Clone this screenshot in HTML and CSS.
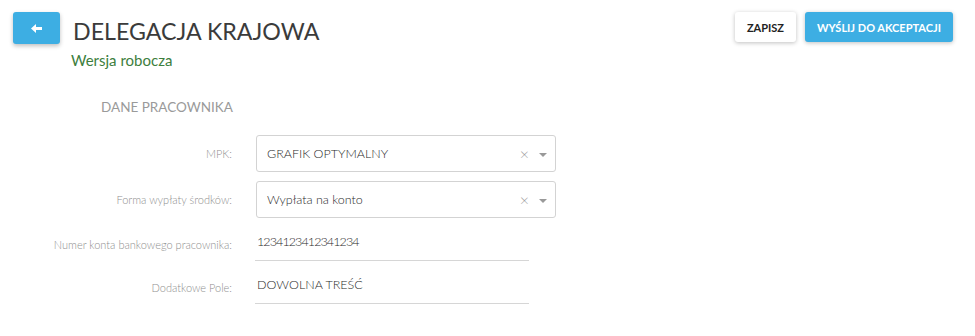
FILE: index.html
```html
<!DOCTYPE html>
<html>

<head>
	<title>
		Delegacja krajowa
	</title>

	<link rel="stylesheet" href="styles.css">

</head>

<body>
	<div id="header">
		<div class="title-block">
			<button class="back-btn">
				<svg width="11" height="9" viewBox="0 0 11 9">
					<path d="M0 4.5 L5 0 L5 3 L11 3 L11 6 L5 6 L5 9 Z" fill="#fff" />
				</svg>
			</button>
			<div>
				<h1>DELEGACJA KRAJOWA</h1>
				<div class="status">Wersja robocza</div>
			</div>
		</div>
		<div class="actions">
			<button class="btn-save">ZAPISZ</button>
			<button class="btn-send">WYŚLIJ DO AKCEPTACJI</button>
		</div>
	</div>

	<div id="form">
		<h2>DANE PRACOWNIKA</h2>
		<div class="row">
			<label>MPK:</label>
			<div class="select">
				<span class="value">GRAFIK OPTYMALNY</span>
				<span class="clear">&times;</span>
				<span class="caret"></span>
			</div>
		</div>
		<div class="row">
			<label>Forma wypłaty środków:</label>
			<div class="select">
				<span class="value">Wypłata na konto</span>
				<span class="clear">&times;</span>
				<span class="caret"></span>
			</div>
		</div>
		<div class="row">
			<label>Numer konta bankowego pracownika:</label>
			<div class="input digits">1234123412341234</div>
		</div>
		<div class="row">
			<label>Dodatkowe Pole:</label>
			<div class="input">DOWOLNA TREŚĆ</div>
		</div>
	</div>
</body>

</html>
```

FILE: styles.css
```css
body {
	margin: 0;
	font-family: Lato, "Noto Sans", sans-serif;
	background: #fff;
	color: #333;
}

#header {
	display: flex;
	justify-content: space-between;
	padding: 12px 22px 0 13px;
}

.title-block {
	display: flex;
	align-items: flex-start;
	gap: 13px;
}

.back-btn {
	width: 47px;
	height: 32px;
	border: none;
	border-radius: 3px;
	background: #3daee3;
	box-shadow: 0 2px 4px rgba(0, 0, 0, 0.25);
	display: flex;
	align-items: center;
	justify-content: center;
	padding: 0;
}

h1 {
	margin: 4px 0 0 0;
	font-size: 23.2px;
	font-weight: 400;
	color: #3b3b3b;
	line-height: 30px;
}

.status {
	margin: 4px 0 0 -2px;
	font-size: 15px;
	color: #3d7e3d;
	line-height: 20px;
}

.actions {
	display: flex;
	gap: 9px;
}

.actions button {
	height: 30px;
	border: none;
	border-radius: 3px;
	font-family: Lato, sans-serif;
	font-weight: 700;
	font-size: 11px;
	padding: 0 12px;
	box-shadow: 0 1px 4px rgba(0, 0, 0, 0.25);
}

.btn-save {
	background: #fff;
	color: #222;
}

.btn-send {
	background: #3daee3;
	color: #fff;
}

h2 {
	margin: 27px 0 0 101px;
	font-size: 13.5px;
	font-weight: 400;
	color: #9a9a9a;
	line-height: 20px;
}

.row {
	display: grid;
	grid-template-columns: 232px 300px;
	column-gap: 24px;
	align-items: center;
}

.row label {
	text-align: right;
	font-size: 11px;
	font-weight: 300;
	color: #8f8f8f;
}

h2 + .row {
	margin-top: 18px;
}

.row + .row {
	margin-top: 9px;
}

.select {
	height: 37px;
	border: 1px solid #d3d3d3;
	border-radius: 3px;
	box-sizing: border-box;
	display: flex;
	align-items: center;
	padding: 0 8px 0 10px;
	font-size: 12.5px;
	font-weight: 300;
	color: #2a2a2a;
}

.select .value {
	flex: 1;
}

.select .clear {
	color: #999;
	font-size: 16px;
	font-weight: 300;
	margin-right: 10px;
}

.select .caret {
	width: 0;
	height: 0;
	border-left: 4px solid transparent;
	border-right: 4px solid transparent;
	border-top: 4px solid #999;
	margin-top: 2px;
}

.input {
	width: 274px;
	height: 34px;
	box-sizing: border-box;
	border-bottom: 1px solid #d6d6d6;
	font-size: 12.5px;
	font-weight: 300;
	color: #2a2a2a;
	padding: 0 0 0 2px;
	line-height: 30px;
	margin-left: -1px;
}

.digits {
	letter-spacing: -0.9px;
}
```
